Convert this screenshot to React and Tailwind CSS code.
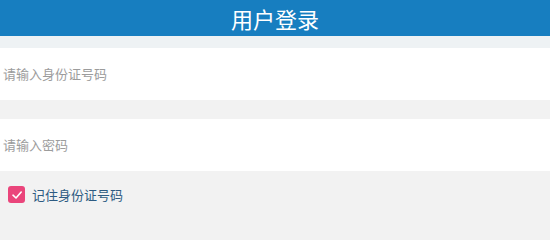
export default function App() {
  const font = { fontFamily: '"Noto Sans CJK SC", "Noto Sans", sans-serif' };
  return (
    <div className="w-[550px] h-[240px] bg-[#f2f2f2] flex flex-col overflow-hidden" style={font}>
      <div className="h-[36px] bg-[#177ec0] flex items-center justify-center">
        <span className="text-[22px] leading-none text-white">用户登录</span>
      </div>
      <div className="h-[12px] bg-[#eef2f4]"></div>
      <div className="h-[52px] bg-white flex items-center pl-[3px]">
        <input className="w-full outline-none text-[13px] text-[#333] placeholder:text-[#9c9c9c] bg-transparent" placeholder="请输入身份证号码" />
      </div>
      <div className="h-[19px]"></div>
      <div className="h-[52px] bg-white flex items-center pl-[3px]">
        <input type="password" className="w-full outline-none text-[13px] text-[#333] placeholder:text-[#9c9c9c] bg-transparent" placeholder="请输入密码" />
      </div>
      <div className="flex items-center gap-[7px] pl-[8px] mt-[14px]">
        <div className="w-[17px] h-[17px] rounded-[3px] bg-[#ea457b] flex items-center justify-center">
          <svg width="12" height="12" viewBox="0 0 12 12" fill="none">
            <path d="M2 6.2 L5 9 L10.2 3" stroke="white" strokeWidth="1.6" strokeLinecap="round" strokeLinejoin="round" />
          </svg>
        </div>
        <span className="text-[13px] text-[#2d5b82]">记住身份证号码</span>
      </div>
    </div>
  );
}
